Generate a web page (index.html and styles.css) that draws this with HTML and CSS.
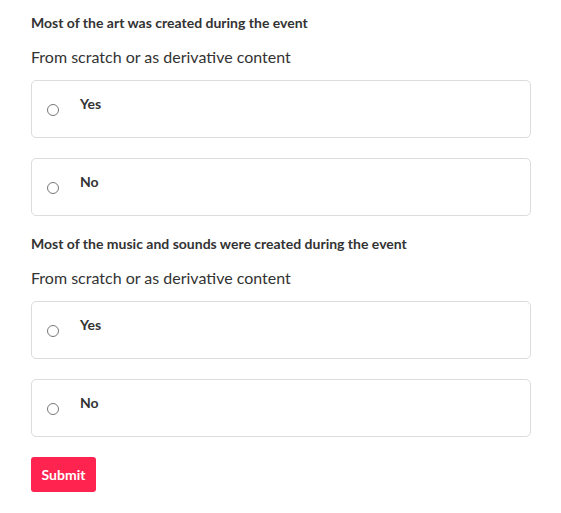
FILE: index.html
```html
<!DOCTYPE html>
<html>
<head>
<meta charset="utf-8">
<link rel="stylesheet" href="styles.css">
</head>
<body>
<form class="form">
  <section class="question">
    <h3 class="q-title">Most of the art was created during the event</h3>
    <p class="q-sub">From scratch or as derivative content</p>
    <label class="option"><span class="radio"></span><span class="opt-label">Yes</span></label>
    <label class="option"><span class="radio"></span><span class="opt-label">No</span></label>
  </section>
  <section class="question">
    <h3 class="q-title">Most of the music and sounds were created during the event</h3>
    <p class="q-sub">From scratch or as derivative content</p>
    <label class="option"><span class="radio"></span><span class="opt-label">Yes</span></label>
    <label class="option"><span class="radio"></span><span class="opt-label">No</span></label>
  </section>
  <button type="button" class="submit">Submit</button>
</form>
</body>
</html>
```
FILE: styles.css
```css
* { box-sizing: border-box; }
html, body { margin: 0; padding: 0; background: #fff; }
body {
  font-family: Lato, "Open Sans", sans-serif;
  color: #333;
}
.form {
  width: 500px;
  margin-left: 31px;
  padding-top: 15px;
  display: flex;
  flex-direction: column;
}
.question {
  display: flex;
  flex-direction: column;
  margin-bottom: 20px;
}
.q-title {
  margin: 0;
  font-size: 14px;
  font-weight: 700;
  line-height: 16px;
  color: #333;
}
.q-sub {
  margin: 16px 0 13px;
  font-size: 16px;
  line-height: 20px;
  color: #333;
}
.option {
  display: flex;
  align-items: flex-start;
  height: 58px;
  border: 1px solid #dcdcdc;
  border-radius: 5px;
  padding: 15px 0 0 15px;
  margin-bottom: 20px;
}
.option:last-child { margin-bottom: 0; }
.radio {
  width: 12px;
  height: 12px;
  border: 1px solid #777;
  border-radius: 50%;
  margin-top: 8px;
  flex: none;
}
.opt-label {
  margin-left: 21px;
  font-size: 14px;
  font-weight: 700;
  line-height: 16px;
  color: #333;
}
.submit {
  align-self: flex-start;
  width: 65px;
  height: 35px;
  border: none;
  border-radius: 3px;
  background: #ff2450;
  color: #fff;
  font-family: Lato, sans-serif;
  font-size: 14px;
  font-weight: 700;
  padding: 0;
}
```
